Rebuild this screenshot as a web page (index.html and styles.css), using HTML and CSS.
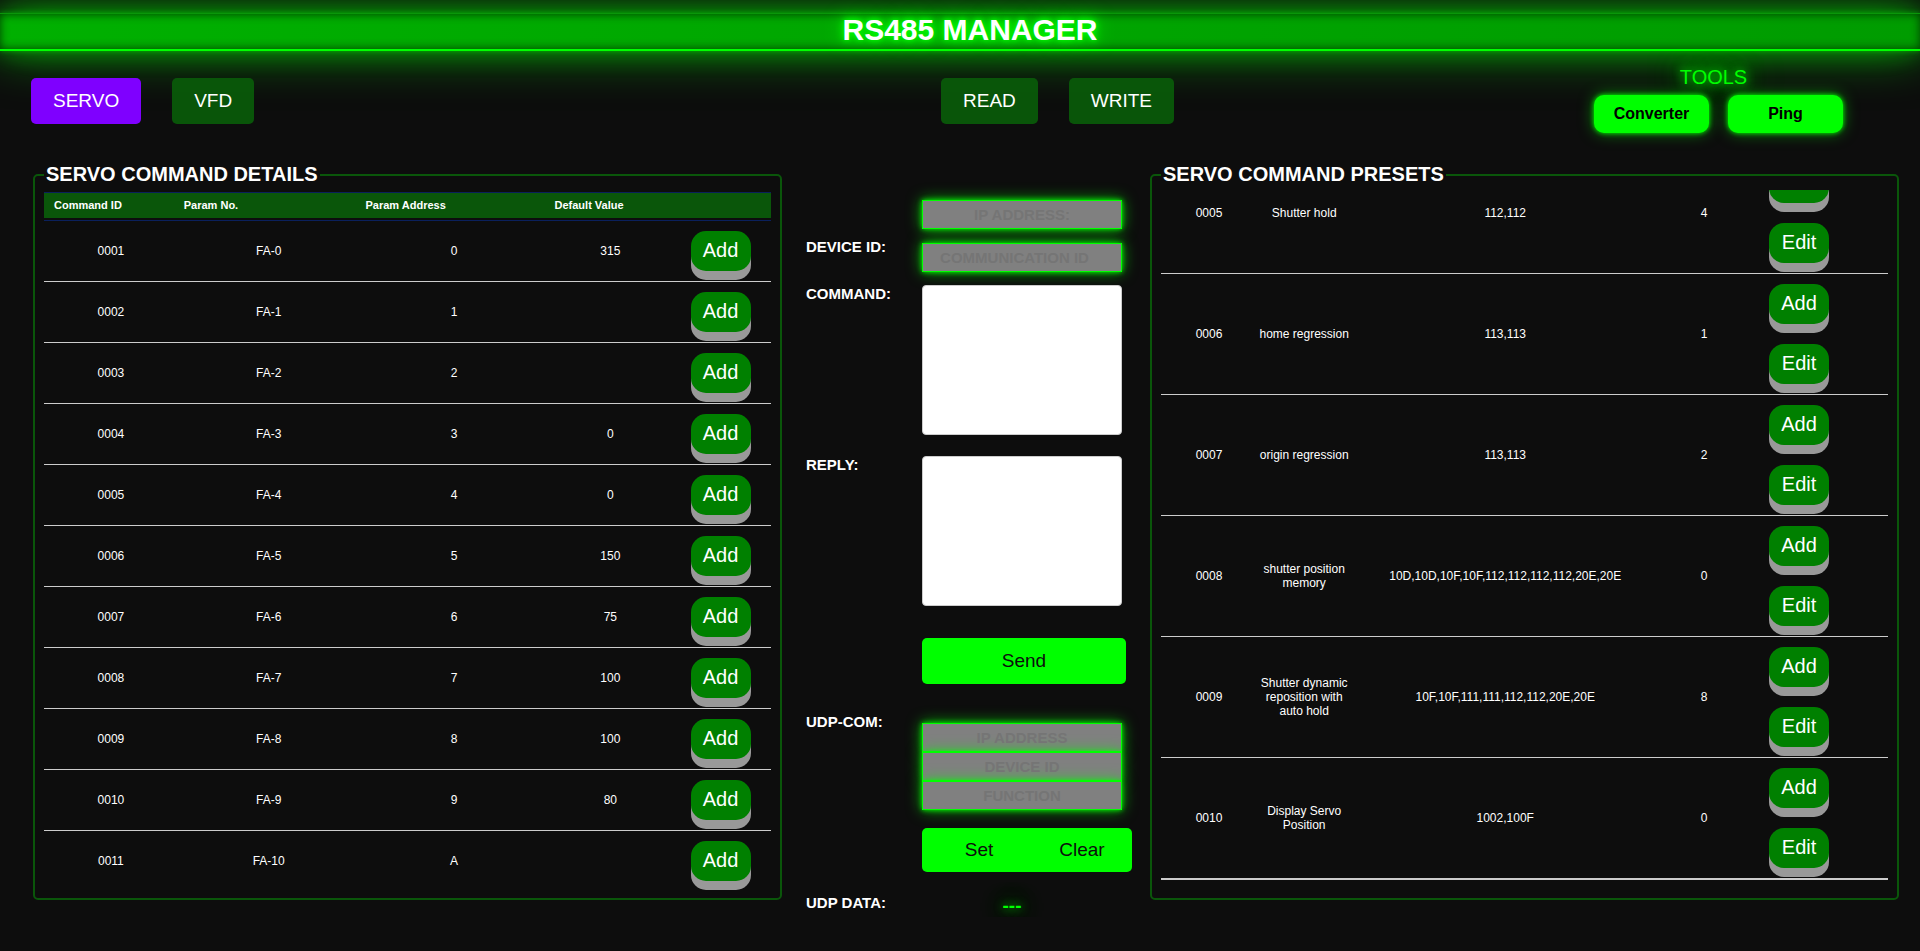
FILE: index.html
```html
<!DOCTYPE html>
<html lang="en">
<head>
<meta charset="utf-8">
<title>RS485 Manager</title>
<link rel="stylesheet" href="styles.css">
</head>
<body>
<header class="banner"><h1 class="banner-title">RS485 MANAGER</h1></header>

<nav class="toolbar">
  <div class="tabs">
    <button class="tab tab-active" type="button">SERVO</button>
    <button class="tab" type="button">VFD</button>
  </div>
  <div class="tabs">
    <button class="tab" type="button">READ</button>
    <button class="tab" type="button">WRITE</button>
  </div>
  <div class="tools">
    <div class="tools-title">TOOLS</div>
    <div class="tools-row">
      <button class="tool" type="button">Converter</button>
      <button class="tool" type="button">Ping</button>
    </div>
  </div>
</nav>

<main class="panels">
  <fieldset class="panel">
    <legend class="panel-title">SERVO COMMAND DETAILS</legend>
    <table class="grid details">
      <colgroup><col class="d-id"><col class="d-param"><col class="d-addr"><col class="d-value"><col class="d-action"></colgroup>
      <thead>
        <tr><th>Command ID</th><th>Param No.</th><th>Param Address</th><th>Default Value</th><th></th></tr>
      </thead>
      <tbody>
        <tr><td>0001</td><td>FA-0</td><td>0</td><td>315</td><td><button class="key" type="button">Add</button></td></tr>
        <tr><td>0002</td><td>FA-1</td><td>1</td><td></td><td><button class="key" type="button">Add</button></td></tr>
        <tr><td>0003</td><td>FA-2</td><td>2</td><td></td><td><button class="key" type="button">Add</button></td></tr>
        <tr><td>0004</td><td>FA-3</td><td>3</td><td>0</td><td><button class="key" type="button">Add</button></td></tr>
        <tr><td>0005</td><td>FA-4</td><td>4</td><td>0</td><td><button class="key" type="button">Add</button></td></tr>
        <tr><td>0006</td><td>FA-5</td><td>5</td><td>150</td><td><button class="key" type="button">Add</button></td></tr>
        <tr><td>0007</td><td>FA-6</td><td>6</td><td>75</td><td><button class="key" type="button">Add</button></td></tr>
        <tr><td>0008</td><td>FA-7</td><td>7</td><td>100</td><td><button class="key" type="button">Add</button></td></tr>
        <tr><td>0009</td><td>FA-8</td><td>8</td><td>100</td><td><button class="key" type="button">Add</button></td></tr>
        <tr><td>0010</td><td>FA-9</td><td>9</td><td>80</td><td><button class="key" type="button">Add</button></td></tr>
        <tr><td>0011</td><td>FA-10</td><td>A</td><td></td><td><button class="key" type="button">Add</button></td></tr>
      </tbody>
    </table>
  </fieldset>

  <form class="console">
    <div class="field field-ip">
      <input class="entry" type="text" placeholder="IP ADDRESS:" aria-label="IP address">
    </div>
    <div class="field field-device">
      <label class="field-label" for="device">DEVICE ID:</label>
      <input class="entry" id="device" type="number" placeholder="COMMUNICATION ID">
    </div>
    <div class="field field-command">
      <label class="field-label" for="command">COMMAND:</label>
      <textarea class="memo" id="command"></textarea>
    </div>
    <div class="field field-reply">
      <label class="field-label" for="reply">REPLY:</label>
      <textarea class="memo" id="reply"></textarea>
    </div>
    <div class="field field-send">
      <button class="send" type="button">Send</button>
    </div>
    <div class="field field-udp">
      <label class="field-label" for="udp-ip">UDP-COM:</label>
      <div class="entry-stack">
        <input class="entry" id="udp-ip" type="text" placeholder="IP ADDRESS">
        <input class="entry" type="text" placeholder="DEVICE ID" aria-label="UDP device ID">
        <input class="entry" type="text" placeholder="FUNCTION" aria-label="UDP function">
      </div>
    </div>
    <div class="field field-actions">
      <div class="pair">
        <button class="pair-set" type="button">Set</button>
        <button class="pair-clear" type="button">Clear</button>
      </div>
    </div>
    <div class="field field-data">
      <span class="field-label">UDP DATA:</span>
      <output class="udp-data">---</output>
    </div>
  </form>

  <fieldset class="panel panel-presets">
    <legend class="panel-title">SERVO COMMAND PRESETS</legend>
    <div class="viewport">
      <table class="grid presets">
        <colgroup><col class="p-id"><col class="p-name"><col class="p-addr"><col class="p-value"><col class="p-action"></colgroup>
        <tbody>
          <tr><td>0005</td><td>Shutter hold</td><td>112,112</td><td>4</td><td><div class="keys"><button class="key" type="button">Add</button><button class="key" type="button">Edit</button></div></td></tr>
          <tr><td>0006</td><td>home regression</td><td>113,113</td><td>1</td><td><div class="keys"><button class="key" type="button">Add</button><button class="key" type="button">Edit</button></div></td></tr>
          <tr><td>0007</td><td>origin regression</td><td>113,113</td><td>2</td><td><div class="keys"><button class="key" type="button">Add</button><button class="key" type="button">Edit</button></div></td></tr>
          <tr><td>0008</td><td>shutter position memory</td><td>10D,10D,10F,10F,112,112,112,112,20E,20E</td><td>0</td><td><div class="keys"><button class="key" type="button">Add</button><button class="key" type="button">Edit</button></div></td></tr>
          <tr><td>0009</td><td>Shutter dynamic reposition with auto hold</td><td>10F,10F,111,111,112,112,20E,20E</td><td>8</td><td><div class="keys"><button class="key" type="button">Add</button><button class="key" type="button">Edit</button></div></td></tr>
          <tr><td>0010</td><td>Display Servo Position</td><td>1002,100F</td><td>0</td><td><div class="keys"><button class="key" type="button">Add</button><button class="key" type="button">Edit</button></div></td></tr>
        </tbody>
      </table>
    </div>
  </fieldset>
</main>
</body>
</html>
```

FILE: styles.css
```css
* {
  box-sizing: border-box;
}

body {
  margin: 0;
  padding-top: 13px;
  background: #0d0d0d;
  color: #fff;
  font-family: "Liberation Sans", Arial, sans-serif;
  overflow: hidden;
}

button,
input,
textarea {
  font-family: inherit;
  margin: 0;
}

button {
  border: 0;
  padding: 0;
  cursor: pointer;
}

/* Banner */
.banner {
  height: 38px;
  display: flex;
  align-items: center;
  justify-content: center;
  padding-left: 20px;
  border-top: 1px solid #0a960a;
  border-bottom: 2px solid #0f0;
  background: linear-gradient(90deg, #00b000, #009c00);
  box-shadow: 0 0 5px rgba(0, 255, 0, 0.4), 0 0 25px rgba(0, 255, 0, 0.4), 0 0 50px rgba(0, 255, 0, 0.6), inset 0 0 10px #003c00;
}

.banner-title {
  margin: 0;
  padding-bottom: 3px;
  font-size: 30px;
  line-height: 34px;
  text-shadow: 0 0 5px #0f0, 0 0 10px #0f0, 0 0 20px #0f0;
}

/* Toolbar */
.toolbar {
  display: grid;
  grid-template-columns: 910fr 653fr 326fr;
  align-items: start;
  height: 112px;
  padding-left: 31px;
}

.tabs {
  display: flex;
  gap: 31px;
  padding-top: 27px;
}

.tab {
  height: 46px;
  padding: 0 22px;
  border-radius: 5px;
  background: rgba(10, 90, 10, 0.95);
  color: #fff;
  font-size: 19px;
}

.tab-active {
  background: #7f00ff;
}

.tools {
  justify-self: start;
  padding-top: 15px;
}

.tools-title {
  padding-right: 10px;
  color: #0f0;
  font-size: 20px;
  line-height: 23px;
  text-align: center;
  text-shadow: 0 0 10px #0f0, 0 0 20px #0f0, 0 0 40px #0f0;
}

.tools-row {
  display: flex;
  gap: 19px;
  padding-top: 6px;
}

.tool {
  width: 115px;
  height: 38px;
  border-radius: 10px;
  background: #0f0;
  color: #000;
  font-size: 16px;
  font-weight: bold;
  box-shadow: 0 0 5px #0f0, 0 0 15px rgba(0, 255, 0, 0.5);
}

/* Panels */
.panels {
  display: grid;
  grid-template-columns: 1fr 368px 1fr;
  align-items: start;
  padding: 0 21px 0 33px;
}

.panel {
  min-width: 0;
  margin: 0;
  padding: 6px 9px 7px;
  border: 2px solid #0a560a;
  border-radius: 5px;
}

.panel-presets {
  padding-top: 4px;
  padding-bottom: 18px;
}

.panel-title {
  padding: 0 2px;
  font-size: 20px;
  font-weight: bold;
  line-height: 23px;
}

.viewport {
  display: flex;
  flex-direction: column;
  justify-content: flex-end;
  height: 690px;
  overflow: hidden;
}

.grid {
  width: 100%;
  table-layout: fixed;
  border-collapse: separate;
  border-spacing: 0;
}

.grid th {
  height: 29px;
  padding: 0 0 3px 6px;
  border-top: 1px solid #0a205c;
  border-bottom: 1px solid #0a205c;
  background: linear-gradient(#0a560a, #0a560a) 0 0 / 100% 25px no-repeat;
  font-size: 11px;
  text-align: left;
}

.grid th:first-child {
  padding-left: 10px;
}

.grid td {
  padding: 0 2px;
  border-bottom: 1px solid #ccc;
  font-size: 12px;
  line-height: 14px;
  text-align: center;
}

.grid td:last-child {
  padding: 10px 0;
}

.grid.details td:last-child {
  padding-right: 2px;
}

.details tr:last-child td {
  border-bottom: 0;
}

.grid.presets tr td:last-child {
  padding-right: 39px;
}

.presets tr:last-child td {
  border-bottom-width: 2px;
}

.d-id { width: 18.4%; }
.d-param { width: 25%; }
.d-addr { width: 26%; }
.d-value { width: 17%; }
.d-action { width: 13.6%; }

.p-id { width: 13.2%; }
.p-name { width: 13%; }
.p-addr { width: 42.3%; }
.p-value { width: 12.4%; }
.p-action { width: 19.1%; }

.keys {
  display: flex;
  flex-direction: column;
  align-items: center;
  gap: 20px;
}

.key {
  display: block;
  width: 60px;
  height: 40px;
  margin: 0 auto;
  padding-bottom: 2px;
  border-radius: 15px;
  background: #008000;
  color: #fff;
  font-size: 20px;
  box-shadow: 0 9px #999;
}

/* Console */
.console {
  padding: 37px 18px 0 24px;
}

.field {
  display: grid;
  grid-template-columns: 116px 1fr;
  align-items: start;
}

.field > :last-child {
  grid-column: 2;
}

.field-ip { height: 38px; }
.field-device { height: 47px; }
.field-device .entry { margin-top: 5px; }
.field-command { height: 171px; }
.field-reply { height: 182px; }
.field-send { height: 75px; }
.field-udp { height: 115px; }
.field-actions { height: 66px; }

.field-label {
  font-size: 15px;
  font-weight: bold;
  line-height: 17px;
}

.entry {
  display: block;
  width: 200px;
  height: 29px;
  padding: 0 2px;
  border: 1px solid #0f0;
  background: #808080;
  color: #000;
  font-size: 15px;
  font-weight: bold;
  text-align: center;
  box-shadow: 0 0 5px #0f0, 0 0 15px rgba(0, 255, 0, 0.7);
}

.entry::placeholder {
  color: #757575;
}

.entry-stack {
  padding-top: 10px;
}

.memo {
  display: block;
  width: 200px;
  height: 150px;
  border: 1px solid #ccc;
  border-radius: 4px;
  background: #fff;
  resize: none;
}

.send,
.pair-set,
.pair-clear {
  background: #0f0;
  color: #0d0d0d;
  font-size: 19px;
}

.send {
  width: 204px;
  height: 46px;
  border-radius: 5px;
}

.pair {
  display: flex;
  width: 210px;
}

.pair-set {
  width: 114px;
  height: 44px;
  border-radius: 5px 0 0 5px;
}

.pair-clear {
  width: 96px;
  height: 44px;
  padding-right: 4px;
  border-radius: 0 5px 5px 0;
}

.udp-data {
  width: 180px;
  color: #0f0;
  font-size: 19px;
  font-weight: bold;
  line-height: 23px;
  text-align: center;
  text-shadow: 0 0 10px #0f0, 0 0 20px #0f0, 0 0 40px #0f0;
}
```
